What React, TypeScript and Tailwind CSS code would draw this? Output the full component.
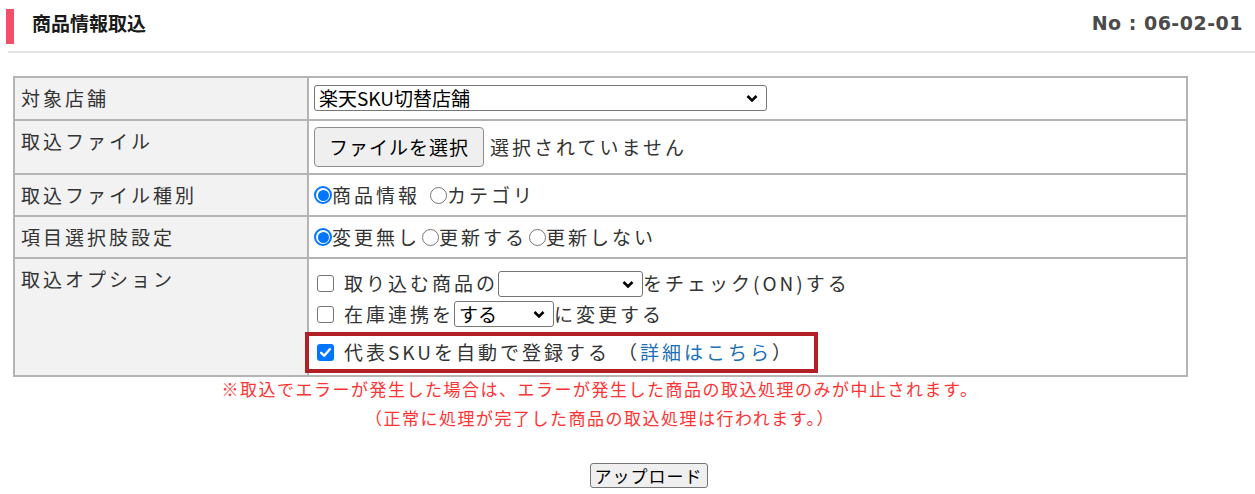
import React, { useState } from 'react';

const jp = { fontFamily: '"Noto Sans CJK JP", "Noto Sans", sans-serif' };

const Row: React.FC<{ label: string; children: React.ReactNode; h: string }> = ({ label, children, h }) => (
    <tr className={h}>
        <th className="w-[294px] bg-[#f2f2f2] border-2 border-[#b4b4b4] align-top text-left font-normal pl-[6px] pt-[6px] text-[19px] leading-[28px] tracking-[3px] text-[#333]">
            {label}
        </th>
        <td className="border-2 border-[#b4b4b4] align-middle pl-[5px] text-[19px] tracking-[3px] text-[#333]">{children}</td>
    </tr>
);

const Radio: React.FC<{ checked: boolean; onClick: () => void }> = ({ checked, onClick }) =>
    checked ? (
        <span
            onClick={onClick}
            className="inline-flex items-center justify-center w-[18px] h-[18px] rounded-full border-2 border-[#0075ff] bg-white shrink-0 cursor-pointer"
        >
            <span className="w-[11px] h-[11px] rounded-full bg-[#0075ff]" />
        </span>
    ) : (
        <span
            onClick={onClick}
            className="inline-block w-[17px] h-[17px] rounded-full border border-[#767676] bg-white shrink-0 cursor-pointer"
        />
    );

const Check: React.FC<{ checked: boolean; onClick: () => void }> = ({ checked, onClick }) =>
    checked ? (
        <span
            onClick={onClick}
            className="inline-flex items-center justify-center w-[17px] h-[17px] rounded-[3px] bg-[#0075ff] shrink-0 cursor-pointer"
        >
            <svg width="13" height="13" viewBox="0 0 12 12">
                <path d="M2 6.3 L4.8 9 L10 3" fill="none" stroke="white" strokeWidth="2.2" strokeLinecap="round" strokeLinejoin="round" />
            </svg>
        </span>
    ) : (
        <span
            onClick={onClick}
            className="inline-block w-[17px] h-[17px] rounded-[3px] border border-[#767676] bg-white shrink-0 cursor-pointer"
        />
    );

const Select: React.FC<{ w: string; value: string }> = ({ w, value }) => (
    <span className={`relative inline-flex items-center ${w} h-[26px] border border-[#767676] rounded-[3px] bg-white`}>
        <span className="pl-[4px] text-[19px] leading-[22px] tracking-normal text-black">{value}</span>
        <svg className="absolute right-[8px] top-[8px]" width="12" height="9" viewBox="0 0 12 9">
            <path d="M1.5 2 L6 6.5 L10.5 2" fill="none" stroke="black" strokeWidth="2.6" />
        </svg>
    </span>
);

const App: React.FC = () => {
    const [fileKind, setFileKind] = useState('item');
    const [choice, setChoice] = useState('none');
    const [takeIn, setTakeIn] = useState(false);
    const [stock, setStock] = useState(false);
    const [autoSku, setAutoSku] = useState(true);

    return (
        <div className="w-[1255px] h-[494px] bg-white text-black overflow-hidden" style={jp}>
            {/* page header */}
            <div className="flex items-center justify-between h-[51px] pl-[6px] pr-[12px]">
                <div className="flex items-center">
                    <div className="w-[8px] h-[35px] bg-[#f0506a] mr-[18px] mt-[1px]" />
                    <h1 className="text-[19px] font-bold text-[#1a1a1a] -mt-[4px]">商品情報取込</h1>
                </div>
                <div
                    className="text-[19px] font-bold text-[#4a4a4a] -mt-[4px] tracking-[0.5px]"
                    style={{ fontFamily: '"DejaVu Sans", Verdana, sans-serif' }}
                >
                    No : 06-02-01
                </div>
            </div>
            <div className="ml-[8px] h-[2px] bg-[#e4e4e4]" />

            <div className="pl-[13px] pt-[23px]">
                <table className="w-[1175px] border-collapse border-2 border-[#a8a8a8]">
                    <tbody>
                        <Row label="対象店舗" h="h-[43px]">
                            <Select w="w-[453px]" value="楽天SKU切替店舗" />
                        </Row>
                        <Row label="取込ファイル" h="h-[54px]">
                            <div className="flex items-center">
                                <button className="h-[40px] px-[14px] bg-[#efefef] border border-[#8f8f8f] rounded-[4px] text-[19px] tracking-[1px] text-black">
                                    ファイルを選択
                                </button>
                                <span className="ml-[6px]">選択されていません</span>
                            </div>
                        </Row>
                        <Row label="取込ファイル種別" h="h-[42px]">
                            <div className="flex items-center">
                                <Radio checked={fileKind === 'item'} onClick={() => setFileKind('item')} />
                                <span>商品情報</span>
                                <span className="ml-[10px]" />
                                <Radio checked={fileKind === 'category'} onClick={() => setFileKind('category')} />
                                <span>カテゴリ</span>
                            </div>
                        </Row>
                        <Row label="項目選択肢設定" h="h-[42px]">
                            <div className="flex items-center">
                                <Radio checked={choice === 'none'} onClick={() => setChoice('none')} />
                                <span>変更無し</span>
                                <span className="ml-[2px]" />
                                <Radio checked={choice === 'update'} onClick={() => setChoice('update')} />
                                <span>更新する</span>
                                <span className="ml-[2px]" />
                                <Radio checked={choice === 'keep'} onClick={() => setChoice('keep')} />
                                <span>更新しない</span>
                            </div>
                        </Row>
                        <Row label="取込オプション" h="h-[118px]">
                            <div className="flex flex-col pt-[6px]">
                                <div className="flex items-center h-[33px]">
                                    <span className="ml-[3px] mr-[10px] flex"><Check checked={takeIn} onClick={() => setTakeIn(!takeIn)} /></span>
                                    <span>取り込む商品の</span>
                                    <Select w="w-[145px]" value="" />
                                    <span>をチェック(ON)する</span>
                                </div>
                                <div className="flex items-center h-[28px]">
                                    <span className="ml-[3px] mr-[10px] flex"><Check checked={stock} onClick={() => setStock(!stock)} /></span>
                                    <span>在庫連携を</span>
                                    <Select w="w-[100px]" value="する" />
                                    <span>に変更する</span>
                                </div>
                                <div className="-ml-[9px] mt-[4px] w-[513px] h-[41px] border-[4px] border-[#b21f24] flex items-center">
                                    <span className="ml-[8px] mr-[10px] flex"><Check checked={autoSku} onClick={() => setAutoSku(!autoSku)} /></span>
                                    <span>代表SKUを自動で登録する</span>
                                    <span className="ml-[8px]">（</span>
                                    <a href="#" className="text-[#1a6fb5]">詳細はこちら</a>
                                    <span>）</span>
                                </div>
                            </div>
                        </Row>
                    </tbody>
                </table>
            </div>

            {/* notes under the form */}
            <div className="w-[1200px] text-center text-[#ff3333] text-[17px] leading-[29px] tracking-[1.5px] -mt-[3px]">
                <p>※取込でエラーが発生した場合は、エラーが発生した商品の取込処理のみが中止されます。</p>
                <p>（正常に処理が完了した商品の取込処理は行われます。）</p>
            </div>

            <div className="w-[1297px] flex justify-center pt-[31px]">
                <button className="h-[25px] px-[4px] bg-[#efefef] border border-[#767676] rounded-[3px] text-[17px] leading-[20px] text-black tracking-[1px]">
                    アップロード
                </button>
            </div>
        </div>
    );
};

export default App;
